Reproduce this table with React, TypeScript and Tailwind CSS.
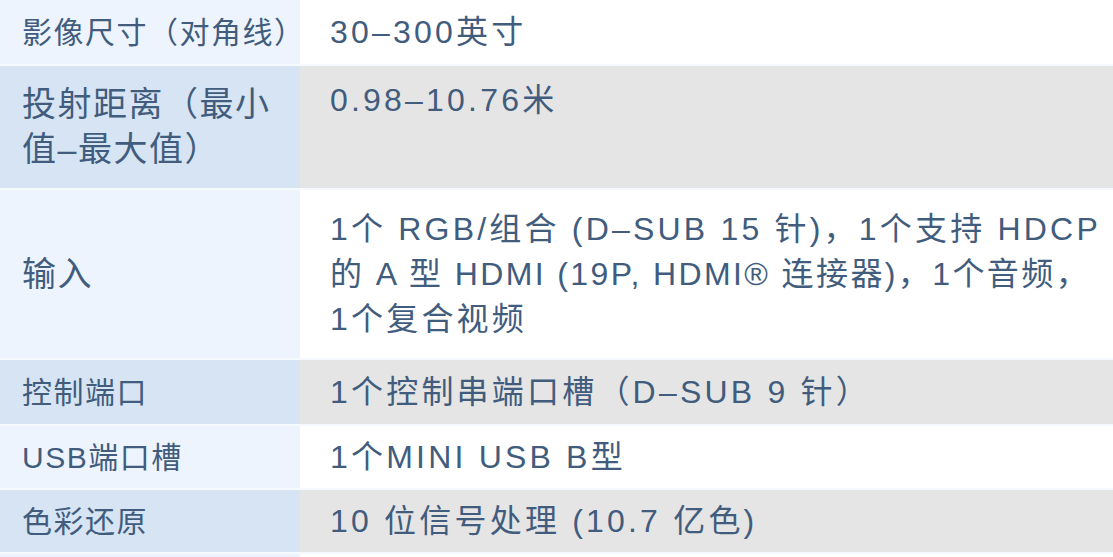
import React from "react";

const font = { fontFamily: '"Liberation Sans", "Noto Sans CJK SC", sans-serif' };

type Row = { k: React.ReactNode; v: React.ReactNode; h: string; dark: boolean; top?: boolean; big?: boolean };

const rows: Row[] = [
  { k: "影像尺寸（对角线）", v: "30–300英寸", h: "h-[64px]", dark: false },
  {
    k: (
      <>
        投射距离（最小
        <br />
        值–最大值）
      </>
    ),
    v: "0.98–10.76米",
    h: "h-[122px]",
    dark: true,
    top: true,
    big: true,
  },
  {
    k: "输入",
    v: (
      <>
        <div>1个 RGB/组合 (D–SUB 15 针)，1个支持 HDCP</div>
        <div className="tracking-[2.4px]">的 A 型 HDMI (19P, HDMI® 连接器)，1个音频，</div>
        <div>1个复合视频</div>
      </>
    ),
    h: "h-[168px]",
    dark: false,
    big: true,
  },
  { k: "控制端口", v: "1个控制串端口槽（D–SUB 9 针）", h: "h-[64px]", dark: true },
  { k: "USB端口槽", v: "1个MINI USB B型", h: "h-[62px]", dark: false },
  { k: "色彩还原", v: "10 位信号处理 (10.7 亿色)", h: "h-[62px]", dark: true },
];

export default function App() {
  return (
    <div
      className="w-[1113px] h-[557px] overflow-hidden bg-[#f6f9fd] flex flex-col gap-[2px] text-[#415c7d] leading-[45px]"
      style={font}
    >
      {rows.map((r, i) => (
        <div key={i} className={`grid grid-cols-[300px_1fr] shrink-0 ${r.h}`}>
          <div
            className={`flex items-center pl-[22px] whitespace-nowrap tracking-[1.5px] ${
              r.big ? "text-[34px]" : "text-[30px]"
            } ${r.dark ? "bg-[#d6e4f4]" : "bg-[#edf4fd]"}`}
          >
            <div>{r.k}</div>
          </div>
          <div
            className={`flex pl-[30px] whitespace-nowrap text-[32px] tracking-[3.2px] ${
              r.top ? "items-start pt-[12px]" : "items-center"
            } ${r.dark ? "bg-[#e5e5e5]" : "bg-white"}`}
          >
            <div>{r.v}</div>
          </div>
        </div>
      ))}
      <div className="grid grid-cols-[300px_1fr] h-[10px] shrink-0">
        <div className="bg-[#edf4fd]" />
        <div className="bg-white" />
      </div>
    </div>
  );
}
